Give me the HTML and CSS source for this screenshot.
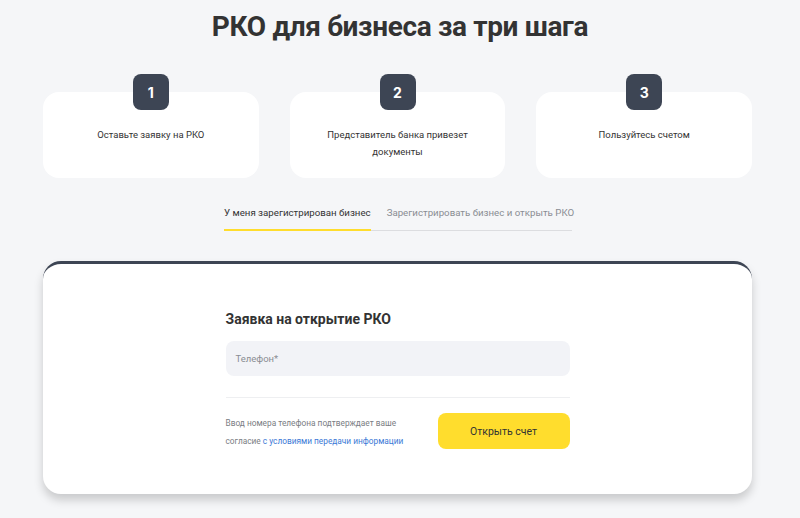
FILE: index.html
```html
<!DOCTYPE html>
<html lang="ru">
<head>
<meta charset="utf-8">
<link rel="stylesheet" href="styles.css">
</head>
<body>
<div class="page">
  <h1 class="title">РКО для бизнеса за три шага</h1>
  <div class="steps">
    <div class="step">
      <div class="badge">1</div>
      <div class="step-text">Оставьте заявку на РКО</div>
    </div>
    <div class="step">
      <div class="badge">2</div>
      <div class="step-text">Представитель банка привезет<br>документы</div>
    </div>
    <div class="step">
      <div class="badge">3</div>
      <div class="step-text">Пользуйтесь счетом</div>
    </div>
  </div>
  <div class="tabs">
    <div class="tab tab-active">У меня зарегистрирован бизнес</div>
    <div class="tab">Зарегистрировать бизнес и открыть РКО</div>
  </div>
  <div class="form-card">
    <div class="form">
      <div class="form-title">Заявка на открытие РКО</div>
      <div class="input">Телефон*</div>
      <div class="sep"></div>
      <div class="form-bottom">
        <div class="note">Ввод номера телефона подтверждает ваше<br>согласие <span class="link">с условиями передачи информации</span></div>
        <div class="button">Открыть счет</div>
      </div>
    </div>
  </div>
</div>
</body>
</html>
```
FILE: styles.css
```css
* { box-sizing: border-box; }
html, body { margin: 0; padding: 0; }
body {
  background: #f5f6f8;
  font-family: Roboto, "Noto Sans", sans-serif;
  color: #333;
  width: 800px;
  height: 518px;
  overflow: hidden;
}
.page {
  padding-top: 10px;
}
.title {
  margin: 0;
  text-align: center;
  font-family: Roboto, "Liberation Sans", sans-serif;
  font-weight: 700;
  font-size: 28px;
  line-height: 34px;
  letter-spacing: -0.35px;
  color: #333;
}
.steps {
  margin: 30px 0 0 43px;
  width: 709px;
  display: flex;
  gap: 31px;
}
.step {
  flex: 1;
  margin-top: 18px;
  height: 86px;
  background: #fff;
  border-radius: 16px;
  display: flex;
  flex-direction: column;
  align-items: center;
}
.badge {
  width: 36px;
  height: 36px;
  margin-top: -18px;
  background: #3d4554;
  color: #fff;
  border-radius: 8px;
  display: flex;
  align-items: center;
  justify-content: center;
  font-family: Inter, Roboto, sans-serif;
  font-weight: 700;
  font-size: 14px;
}
.step-text {
  margin-top: 16px;
  font-size: 9.5px;
  line-height: 17px;
  text-align: center;
  color: #333;
}
.tabs {
  margin: 24px 0 0 224px;
  width: 348px;
  display: flex;
  gap: 16px;
  border-bottom: 1px solid #dcdde0;
}
.tab {
  white-space: nowrap;
  flex-shrink: 0;
  font-size: 9.7px;
  line-height: 14px;
  padding: 4px 0 10px;
  color: #8a8d93;
}
.tab-active {
  color: #333;
  box-shadow: inset 0 -2px 0 #ffdd2d;
  margin-bottom: -1px;
  padding-bottom: 11px;
}
.form-card {
  margin: 30px 0 0 43px;
  width: 709px;
  height: 233px;
  background: #fff;
  border-radius: 18px;
  border-top: 3px solid #3d4554;
  box-shadow: 0 6px 10px rgba(0, 0, 0, 0.18);
}
.form {
  width: 344px;
  margin: 0 auto;
  padding-top: 46px;
}
.form-title {
  font-weight: 700;
  font-size: 14px;
  line-height: 18px;
  color: #333;
}
.input {
  margin-top: 13px;
  height: 35px;
  border-radius: 8px;
  background: #f2f3f7;
  padding-left: 10px;
  display: flex;
  align-items: center;
  font-size: 9.5px;
  color: #8a8d93;
}
.sep {
  margin-top: 21px;
  height: 1px;
  background: #eeeff1;
}
.form-bottom {
  margin-top: 15px;
  display: flex;
  justify-content: space-between;
  align-items: flex-start;
}
.note {
  margin-top: 1px;
  font-size: 8.3px;
  line-height: 18px;
  color: #7a7d83;
}
.link { color: #3a78d6; }
.button {
  width: 132px;
  height: 36px;
  background: #ffdd2d;
  border-radius: 8px;
  display: flex;
  align-items: center;
  justify-content: center;
  font-size: 10.5px;
  color: #333;
}
```
